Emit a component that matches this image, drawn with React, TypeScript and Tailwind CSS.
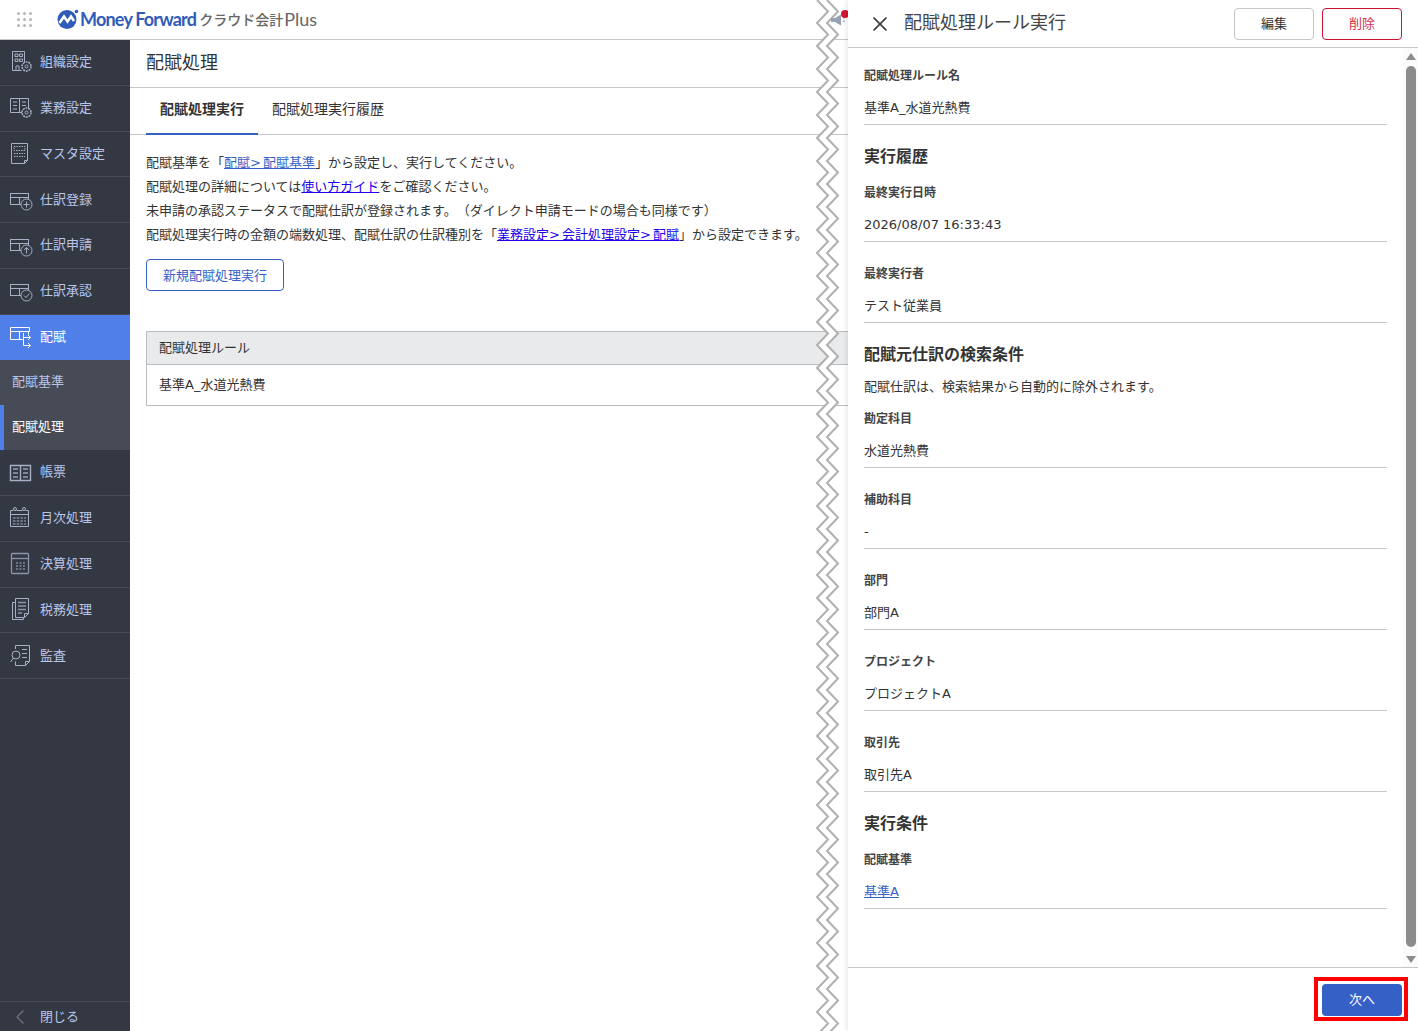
import { X, ChevronLeft } from 'lucide-react';

const font = { fontFamily: '"DejaVu Sans", "Noto Sans CJK JP", sans-serif' };

type IconProps = { kind: string };

const MenuIcon = ({ kind }: IconProps) => {
  const c = 'currentColor';
  const tray = (
    <>
      <rect x="1.5" y="6.5" width="18" height="11" fill="none" stroke={c} />
      <path d="M1.5 10.500h18M10.500 10.500v7" fill="none" stroke={c} />
    </>
  );
  const badge = <circle cx="17.500" cy="17.500" r="5.500" fill="#343842" stroke={c} />;
  const gear = (
    <>
      <circle cx="17.500" cy="17.500" r="4.500" fill="#343842" strokeWidth="1.500" strokeDasharray="2 .8" />
      <circle cx="17.500" cy="17.500" r="1.500" />
    </>
  );
  return (
    <svg width="26" height="26" viewBox="0 0 26 26" fill="none" stroke={c} strokeWidth="1">
      {kind === 'org' && (
        <>
          <path d="M3.500 21.500v-19h12v11M3.500 21.500h9" />
          <path d="M6 5h3v2.500H6zM10.500 5h3v2.500h-3zM6 10h3v2.500H6zM10.500 10h3v2.500h-3zM7 21v-4h3v4" />
          {gear}
        </>
      )}
      {kind === 'work' && (
        <>
          <path d="M1.500 3.500h18v14h-18zM10.500 3.500v14M4 7h4M4 10.500h4M4 14h4M13 7h4M13 10.500h4" />
          {gear}
        </>
      )}
      {kind === 'master' && (
        <>
          <path d="M2.500 2.500h16v17l-3 3h-13zM15.500 22.500v-3h3" />
          <path d="M5 5.500h11v4H5zM5 12.500h11M5 15.500h11" strokeDasharray="1.500 1" />
        </>
      )}
      {kind === 'add' && (
        <>
          {tray}
          {badge}
          <path d="M17.500 14.500v6M14.500 17.500h6" />
        </>
      )}
      {kind === 'up' && (
        <>
          {tray}
          {badge}
          <path d="M17.500 20.500v-6M15 17l2.500-2.500L20 17" />
        </>
      )}
      {kind === 'check' && (
        <>
          {tray}
          {badge}
          <path d="m15 17.500 2 2 3.500-4" />
        </>
      )}
      {kind === 'alloc' && (
        <>
          <path d="M1.500 3.500h19v4h-19zM1.500 7.500v8h12M10.500 7.500v8M19.500 7.500v3" />
          <path d="M14.500 9v12.500h7M19 19l2.500 2.500L19 24M14.500 13.500h7M19 11l2.500 2.500L19 16" />
        </>
      )}
      {kind === 'book' && (
        <>
          <path d="M1.500 5.500h20v15h-20zM11.500 5.500v15" strokeWidth="1.400" />
          <path d="M4 9h5M4 13h5M4 17h5M14 9h5M14 13h5M14 17h5" strokeWidth="1.800" stroke="#7f869a" />
        </>
      )}
      {kind === 'calendar' && (
        <>
          <path d="M4.500 5.500h-3v16h18v-16h-3M7.500 5.500h6M1.500 9.500h18" />
          <circle cx="6" cy="4" r="1.500" />
          <circle cx="15" cy="4" r="1.500" />
          <path d="M4 13h13M4 16h13M4 19h13" strokeDasharray="2.500 1.200" />
        </>
      )}
      {kind === 'calc' && (
        <>
          <rect x="2.500" y="2.500" width="17" height="20" rx="1" strokeWidth="1.300" stroke="#8d93a8" />
          <path d="M2.500 7.500h17" strokeWidth="1.300" stroke="#8d93a8" />
          <path d="M7 12h9M7 15h9M7 18h9" strokeDasharray="2 1.500" />
        </>
      )}
      {kind === 'tax' && (
        <>
          <path d="M6.500 5.500h-3v17h11v-2" />
          <path d="M6.500 1.500h13v15l-4 4h-9zM15.500 20.500v-4h4" />
          <path d="M9 5.500h8M9 9h8M9 12.500h8M9 16h4" strokeWidth="1.500" stroke="#8d93a8" />
        </>
      )}
      {kind === 'audit' && (
        <>
          <path d="M6.500 6V2.500h14v16l-4 4h-10v-4M16.500 22.500v-4h4" />
          <path d="M13 6.500h5M13 10.500h5M13 14.500h5" />
          <circle cx="7" cy="12" r="4" />
          <path d="m4.500 15-3 4" />
        </>
      )}
    </svg>
  );
};

const menuTop = [
  { kind: 'org', label: '組織設定' },
  { kind: 'work', label: '業務設定' },
  { kind: 'master', label: 'マスタ設定' },
  { kind: 'add', label: '仕訳登録' },
  { kind: 'up', label: '仕訳申請' },
  { kind: 'check', label: '仕訳承認' },
];

const menuBottom = [
  { kind: 'book', label: '帳票' },
  { kind: 'calendar', label: '月次処理' },
  { kind: 'calc', label: '決算処理' },
  { kind: 'tax', label: '税務処理' },
  { kind: 'audit', label: '監査' },
];

const MenuRow = ({ kind, label }: { kind: string; label: string }) => (
  <div className="flex h-[45.8px] items-center border-b border-[#474b55] pl-[9px] text-[13px] text-[#b9c6ea]">
    <span className="flex w-[31px] text-[#a9b0c6]">
      <MenuIcon kind={kind} />
    </span>
    <span className="mb-[1px]">{label}</span>
  </div>
);

const Sidebar = () => (
  <aside className="flex w-[130px] shrink-0 flex-col bg-[#343842]">
    {menuTop.map((m) => (
      <MenuRow key={m.label} {...m} />
    ))}
    <div className="flex h-[45.4px] items-center bg-[#4f7fe8] pl-[9px] text-[13px] text-white">
      <span className="flex w-[31px]">
        <MenuIcon kind="alloc" />
      </span>
      <span className="mb-[1px]">配賦</span>
    </div>
    <div className="flex h-[45px] items-center bg-[#474b55] pb-[2px] pl-3 text-[13px] text-[#b9c6ea]">配賦基準</div>
    <div className="flex h-[45px] items-center border-l-4 border-[#4f7fe8] bg-[#474b55] pb-[2px] pl-2 text-[13px] text-white">配賦処理</div>
    {menuBottom.map((m) => (
      <MenuRow key={m.label} {...m} />
    ))}
    <div className="mt-auto flex h-[30px] items-center border-t border-[#474b55] text-[13px] text-[#b9c6ea]">
      <span className="flex w-10 justify-center text-[#6d7383]">
        <ChevronLeft size={24} strokeWidth={1.25} />
      </span>
      閉じる
    </div>
  </aside>
);

const Logo = () => (
  <div className="flex items-center pb-[2px] pl-[57px]">
    <svg width="22" height="20" viewBox="0 0 22 20" className="mr-[1px]">
      <circle cx="10" cy="10.500" r="9.500" fill="#2f5cb8" />
      <path d="M2.500 14 7 7.500 10.500 12.500 14 7.500 17 12" fill="none" stroke="#fff" strokeWidth="2.600" />
      <circle cx="19.500" cy="2.500" r="1.800" fill="#2f5cb8" />
    </svg>
    <span className="text-[18px] leading-none font-bold tracking-[-0.8px] text-[#2f5cb8]" style={{ fontFamily: '"Lato", sans-serif' }}>
      Money Forward
    </span>
    <span className="ml-[3px] text-sm leading-none font-medium text-[#666]" style={{ fontFamily: '"Noto Sans CJK JP", sans-serif' }}>
      クラウド会計
    </span>
    <span className="ml-[1px] text-[18px] leading-none text-[#666]" style={{ fontFamily: '"Lato", sans-serif' }}>
      Plus
    </span>
  </div>
);

const Grip = () => (
  <div className="absolute top-[12px] left-[17px] grid grid-cols-3 gap-[3px]">
    {[0, 1, 2, 3, 4, 5, 6, 7, 8].map((i) => (
      <span key={i} className="h-[3px] w-[3px] rounded-full bg-[#b4b6bb]" />
    ))}
  </div>
);

const Main = () => (
  <main className="min-w-0 flex-1 bg-white text-[13px] text-[#333]">
    <div className="flex h-12 items-center border-b border-[#c4c6ca] pb-[1px] pl-4 text-lg leading-none">配賦処理</div>
    <div className="flex h-[47px] border-b border-[#c4c6ca] pl-4 text-sm">
      <div className="flex h-[47px] w-28 items-center justify-center border-b-2 border-[#3561c7] pb-[3px] font-bold">配賦処理実行</div>
      <div className="flex w-[140px] items-center justify-center pb-[5px]">配賦処理実行履歴</div>
    </div>
    <div className="pt-4 pl-4 leading-6 whitespace-nowrap">
      <p>
        配賦基準を「<a className="text-[#3561c7] underline [word-spacing:-2px]">配賦&gt; 配賦基準</a>」から設定し、実行してください。
      </p>
      <p>
        配賦処理の詳細については<a className="text-[#2200ee] underline">使い方ガイド</a>をご確認ください。
      </p>
      <p>未申請の承認ステータスで配賦仕訳が登録されます。（ダイレクト申請モードの場合も同様です）</p>
      <p>
        配賦処理実行時の金額の端数処理、配賦仕訳の仕訳種別を「<a className="text-[#2200ee] underline [word-spacing:-2px]">業務設定&gt; 会計処理設定&gt; 配賦</a>」から設定できます。
      </p>
      <button className="mt-3 flex h-8 w-[138px] items-center justify-center rounded border border-[#3561c7] pt-[1px] text-[#3561c7]">
        新規配賦処理実行
      </button>
    </div>
    <div className="mt-10 ml-4 border-y border-l border-[#b9bcc2]">
      <div className="flex h-[33px] items-center border-b border-[#b9bcc2] bg-[#e9eaec] pl-3">配賦処理ルール</div>
      <div className="flex h-10 items-center pl-3">基準A_水道光熱費</div>
    </div>
  </main>
);

const Field = ({ label, value, link }: { label: string; value: string; link?: boolean }) => (
  <div className="mb-[23px] border-b border-[#c4c6ca] pt-[1px] pb-[6px] last:mb-0">
    <div className="h-4 text-xs leading-4 font-bold text-[#444]">{label}</div>
    <div className={`mt-[14px] h-5 text-[13px] leading-5 ${link ? 'text-[#3561c7] underline' : 'text-[#333]'}`}>{value}</div>
  </div>
);

const Section = ({ children }: { children: string }) => (
  <h2 className="mt-[-3px] mb-[15px] h-6 text-base leading-6 font-bold text-[#333]">{children}</h2>
);

const Panel = () => (
  <section className="z-10 flex h-full w-[570px] shrink-0 flex-col bg-white shadow-[-2px_0_4px_rgba(0,0,0,0.08)]">
    <header className="flex h-12 shrink-0 items-center border-b border-[#c4c6ca] pr-4 pl-5">
      <X size={24} strokeWidth={1.7} className="text-[#333]" />
      <h1 className="mb-[1px] ml-3 flex-1 text-lg leading-none text-[#444]">配賦処理ルール実行</h1>
      <button className="flex h-8 w-20 items-center justify-center rounded border border-[#c4c6ca] text-[13px] text-[#333]">編集</button>
      <button className="ml-2 flex h-8 w-20 items-center justify-center rounded border border-[#cc1133] text-[13px] text-[#d2304f]">削除</button>
    </header>
    <div className="relative min-h-0 flex-1 overflow-hidden pt-[19px] pr-[31px] pl-4">
      <Field label="配賦処理ルール名" value="基準A_水道光熱費" />
      <Section>実行履歴</Section>
      <Field label="最終実行日時" value="2026/08/07 16:33:43" />
      <Field label="最終実行者" value="テスト従業員" />
      <h2 className="mt-[-3px] h-6 text-base leading-6 font-bold text-[#333]">配賦元仕訳の検索条件</h2>
      <p className="mt-[10px] mb-[13px] h-5 text-[13px] leading-5 text-[#333]">配賦仕訳は、検索結果から自動的に除外されます。</p>
      <Field label="勘定科目" value="水道光熱費" />
      <Field label="補助科目" value="-" />
      <Field label="部門" value="部門A" />
      <Field label="プロジェクト" value="プロジェクトA" />
      <Field label="取引先" value="取引先A" />
      <Section>実行条件</Section>
      <Field label="配賦基準" value="基準A" link />
      <div className="absolute top-0 right-0 flex h-[919px] w-[15px] flex-col items-center bg-[#fbfbfb] pt-[5px] pb-[4px]">
        <span className="h-0 w-0 border-x-[5px] border-b-[7px] border-x-transparent border-b-[#8c8c8c]" />
        <span className="mt-[6px] w-[10px] flex-1 rounded-full bg-[#8c8c8c]" />
        <span className="mt-[9px] h-0 w-0 border-x-[5px] border-t-[7px] border-x-transparent border-t-[#8c8c8c]" />
      </div>
    </div>
    <footer className="flex h-16 shrink-0 items-center justify-end border-t border-[#c4c6ca] pr-4">
      <button className="flex h-8 w-20 items-center justify-center rounded bg-[#3561c7] text-[13px] text-white">次へ</button>
    </footer>
  </section>
);

const tornPoints = (x: number) => {
  const pts: string[] = [];
  for (let i = 0; i <= 90; i++) {
    pts.push(`${x + (i % 2 === 0 ? 0 : 11)},${i * 11.5}`);
  }
  return pts.join(' ');
};

const Torn = () => (
  <svg className="absolute top-0 left-[812px]" width="36" height="1031" viewBox="0 0 36 1031">
    <polygon points={`${tornPoints(5)} ${tornPoints(15).split(' ').reverse().join(' ')}`} fill="#fff" />
    <polyline points={tornPoints(5)} fill="none" stroke="#b0b0b0" strokeWidth="2" />
    <polyline points={tornPoints(15)} fill="none" stroke="#b0b0b0" strokeWidth="2" />
  </svg>
);

// the megaphone with its red dot sits in the page header, half under the panel
const Notice = () => (
  <div className="absolute top-[9px] left-[830px] h-[20px] w-[18px]">
    <svg width="16" height="14" viewBox="0 0 16 14" className="absolute top-[5px] left-0">
      <path d="M1 4h4l6-3.500v11L5 8H1z" fill="#98a1b4" />
      <path d="M14 3v1.500M14 6.500v1.500" stroke="#98a1b4" strokeWidth="1.500" />
    </svg>
    <span className="absolute top-[1px] left-[11px] h-[8px] w-[8px] rounded-full bg-[#d5152f]" />
  </div>
);

export default function App() {
  return (
    <div className="relative flex h-[1031px] w-[1418px] overflow-hidden bg-white [text-spacing-trim:space-all]" style={font}>
      <div className="flex min-w-0 flex-1 flex-col">
        <div className="relative flex h-10 shrink-0 items-center border-b border-[#c4c6ca] bg-white">
          <Grip />
          <Logo />
        </div>
        <div className="flex min-h-0 flex-1">
          <Sidebar />
          <Main />
        </div>
      </div>
      <Torn />
      <Notice />
      <Panel />
      <div className="pointer-events-none absolute top-[977px] left-[1314px] z-20 h-[44px] w-[94px] border-4 border-[#ff0000]" />
    </div>
  );
}
